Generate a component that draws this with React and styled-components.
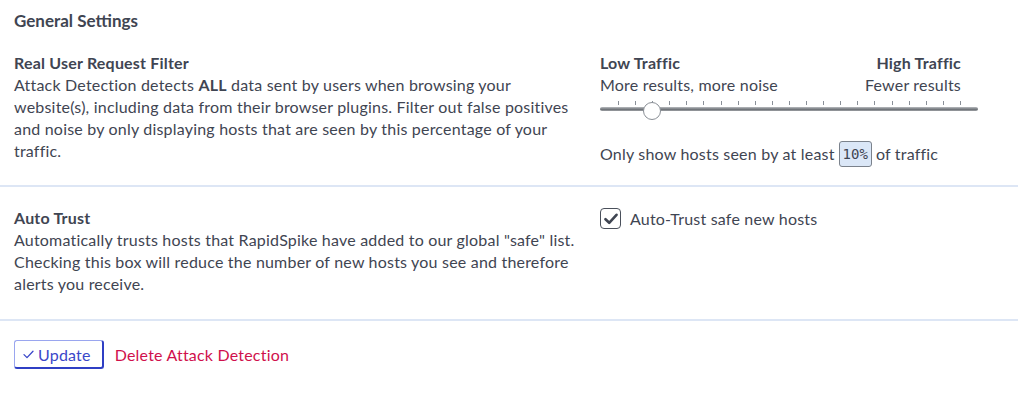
import React, { useState } from 'react';
import styled, { createGlobalStyle } from 'styled-components';

const GlobalStyle = createGlobalStyle`
  body {
    margin: 0;
    background: #fff;
    font-family: Lato, "Noto Sans", sans-serif;
    color: #3f4552;
  }
`;

const TICKS = Array.from({ length: 21 }, (_, i) => i);

const App = () => {
  const [percent] = useState(10);
  const [autoTrust, setAutoTrust] = useState(true);

  return (
    <>
      <GlobalStyle />
      <Page>
        <Title>General Settings</Title>

        <Section className="first">
          <Info>
            <Heading>Real User Request Filter</Heading>
            <Text>
              Attack Detection detects <b>ALL</b> data sent by users when browsing your
              website(s), including data from their browser plugins. Filter out false positives
              and noise by only displaying hosts that are seen by this percentage of your
              traffic.
            </Text>
          </Info>
          <Control>
            <Ends>
              <div>
                <Heading>Low Traffic</Heading>
                <Text>More results, more noise</Text>
              </div>
              <div className="right">
                <Heading>High Traffic</Heading>
                <Text>Fewer results</Text>
              </div>
            </Ends>
            <Slider>
              <Ticks>
                {TICKS.map((t) => <Tick key={t} />)}
              </Ticks>
              <Track>
                <Thumb style={{ left: `calc(18px + ${percent} * 3.42px - 9px)` }} />
              </Track>
            </Slider>
            <Summary>
              Only show hosts seen by at least <Badge>{percent}%</Badge> of traffic
            </Summary>
          </Control>
        </Section>

        <Section className="second">
          <Info>
            <Heading>Auto Trust</Heading>
            <Text>
              Automatically trusts hosts that RapidSpike have added to our global "safe" list.
              Checking this box will reduce the number of new hosts you see and therefore
              alerts you receive.
            </Text>
          </Info>
          <Control>
            <CheckLabel onClick={() => setAutoTrust(!autoTrust)}>
              <Box>
                {autoTrust && (
                  <svg width="14" height="12" viewBox="0 0 14 12">
                    <path d="M1.5 6.2 L5.2 9.8 L12.5 1.8" fill="none" stroke="#3f4552" strokeWidth="2.6" strokeLinecap="round" strokeLinejoin="round" />
                  </svg>
                )}
              </Box>
              Auto-Trust safe new hosts
            </CheckLabel>
          </Control>
        </Section>

        <Actions>
          <UpdateButton>
            <svg width="11" height="9" viewBox="0 0 11 9">
              <path d="M1 4.6 L4 7.6 L10 1.2" fill="none" stroke="#3a47c9" strokeWidth="1.3" strokeLinecap="round" strokeLinejoin="round" />
            </svg>
            Update
          </UpdateButton>
          <DeleteLink>Delete Attack Detection</DeleteLink>
        </Actions>
      </Page>
    </>
  );
};

const Page = styled.div`
  width: 1018px;
  height: 394px;
  overflow: hidden;
`;

const Title = styled.h2`
  margin: 0;
  padding: 10px 14px 0;
  font-size: 17px;
  font-weight: 700;
  line-height: 22px;
`;

const Section = styled.div`
  display: flex;
  justify-content: space-between;
  padding: 0 40px 0 14px;
  border-bottom: 2px solid #dde6f5;

  &.first {
    padding-top: 20px;
    padding-bottom: 18px;
  }

  &.second {
    padding-top: 20px;
    padding-bottom: 24px;
  }
`;

const Info = styled.div`
  width: 572px;
`;

const Heading = styled.div`
  font-size: 16px;
  font-weight: 700;
  line-height: 22px;
  letter-spacing: 0.2px;
`;

const Text = styled.div`
  font-size: 16px;
  line-height: 22px;
  letter-spacing: 0.2px;

  b {
    font-weight: 700;
  }
`;

const Control = styled.div`
  width: 378px;
`;

const Ends = styled.div`
  display: flex;
  justify-content: space-between;

  .right {
    text-align: right;
    padding-right: 17px;
  }
`;

const Slider = styled.div`
  margin-top: 5px;
  position: relative;
`;

const Ticks = styled.div`
  display: flex;
  justify-content: space-between;
  padding: 0 17px 0 18px;
  height: 5px;
`;

const Tick = styled.span`
  width: 1px;
  height: 4px;
  background: #8a9098;
`;

const Track = styled.div`
  position: relative;
  margin-top: 1px;
  height: 4px;
  border-radius: 2px;
  background: linear-gradient(#b9bcc0, #6f7378 60%, #9ea1a5);
`;

const Thumb = styled.span`
  position: absolute;
  top: -5px;
  width: 18px;
  height: 18px;
  border-radius: 50%;
  background: #fff;
  border: 1px solid #8a8f96;
  box-sizing: border-box;
`;

const Summary = styled.div`
  margin-top: 30px;
  font-size: 16px;
  line-height: 26px;
  letter-spacing: 0.2px;
  display: flex;
  align-items: center;
  gap: 4px;
`;

const Badge = styled.span`
  display: inline-flex;
  align-items: center;
  height: 26px;
  box-sizing: border-box;
  padding: 0 3px;
  border: 1px solid #7b828c;
  border-radius: 3px;
  background: #dbe7f7;
  font-family: "DejaVu Sans Mono", monospace;
  font-size: 14px;
  letter-spacing: 0;
  color: #3f4552;
`;

const CheckLabel = styled.label`
  display: flex;
  align-items: center;
  gap: 9px;
  padding-top: 1px;
  font-size: 16px;
  letter-spacing: 0.2px;
  cursor: pointer;
`;

const Box = styled.span`
  display: flex;
  align-items: center;
  justify-content: center;
  width: 21px;
  height: 21px;
  box-sizing: border-box;
  border: 1.5px solid #4a505b;
  border-radius: 4px;
`;

const Actions = styled.div`
  display: flex;
  align-items: center;
  gap: 11px;
  padding: 19px 14px;
`;

const UpdateButton = styled.button`
  display: flex;
  align-items: center;
  gap: 4px;
  height: 29px;
  padding: 0 11px 0 8px;
  background: #fff;
  border: 1px solid #9aa6ef;
  border-bottom: 2px solid #2f3fc4;
  border-right: 2px solid #2f3fc4;
  border-radius: 3px;
  color: #3a47c9;
  font-family: Lato, "Noto Sans", sans-serif;
  font-size: 16px;
  letter-spacing: 0.2px;
  cursor: pointer;
`;

const DeleteLink = styled.a`
  color: #d0104c;
  font-size: 16px;
  letter-spacing: 0.2px;
  cursor: pointer;
`;

export default App;
